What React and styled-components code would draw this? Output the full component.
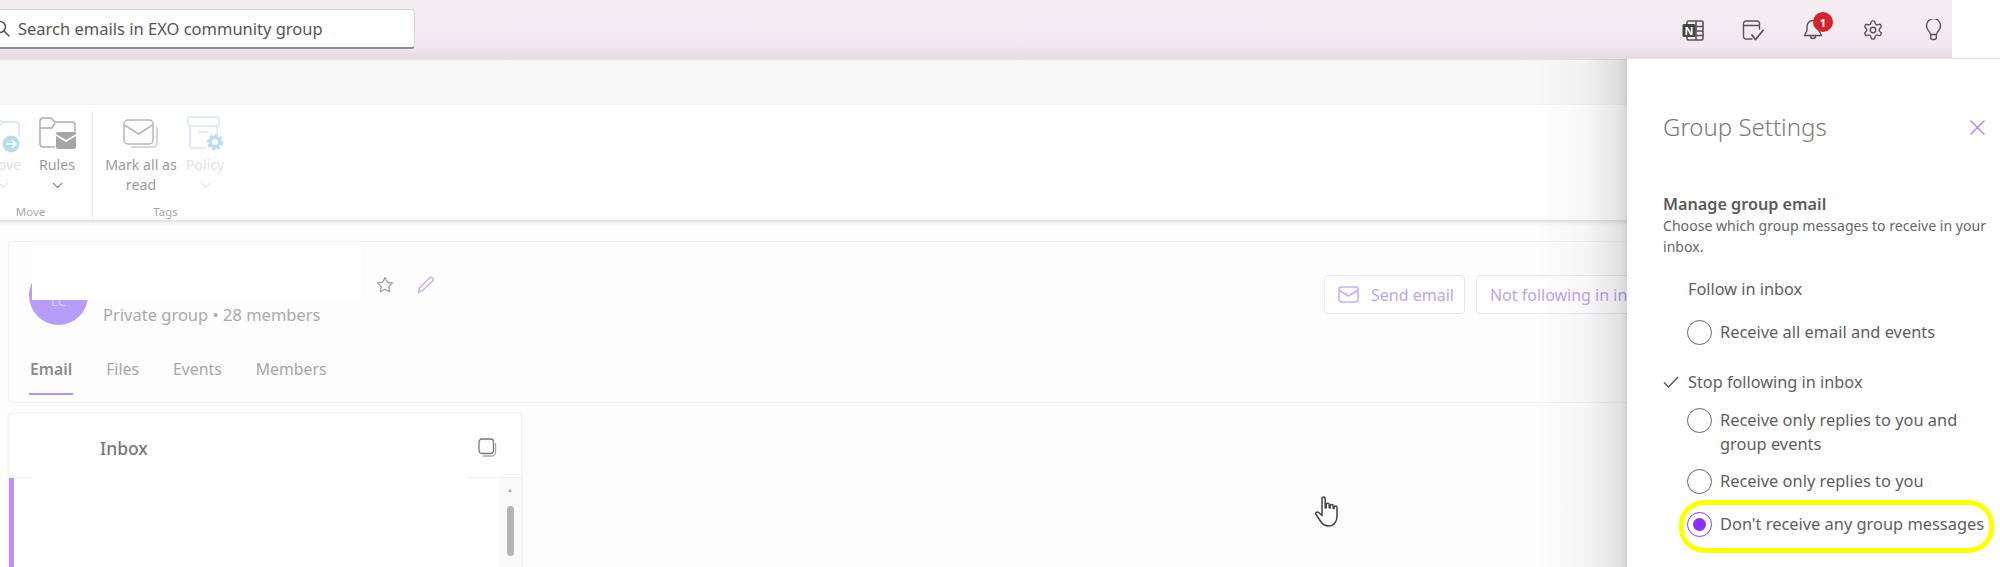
import React from "react";
import styled, { createGlobalStyle } from "styled-components";

const GlobalStyle = createGlobalStyle`
  html, body { margin: 0; padding: 0; background: #fff; }
  * { box-sizing: border-box; }
  body { font-family: "Noto Sans", "Open Sans", Arial, sans-serif; }
`;

const Page = styled.div`
  position: relative;
  width: 2000px;
  height: 567px;
  overflow: hidden;
  display: flex;
  flex-direction: column;
  background: #fdfdfd;
`;

const Header = styled.header`
  flex: none;
  height: 60px;
  display: flex;
  background: #fff;
  border-bottom: 2px solid #eadfe8;
`;

const HeaderBar = styled.div`
  width: 1952px;
  display: flex;
  align-items: center;
  justify-content: space-between;
  padding-right: 8px;
  background: linear-gradient(180deg, #f6edf3 0%, #f3e8f0 80%, #e6d9e3 100%);
`;

const SearchBox = styled.div`
  width: 435px;
  height: 40px;
  margin-left: -20px;
  display: flex;
  align-items: center;
  gap: 8px;
  padding-left: 12px;
  background: #fff;
  border: 1px solid #d9d3d7;
  border-bottom: 2px solid #8f8b8e;
  border-radius: 4px;
  font-size: 16.5px;
  color: #555;
`;

const HeaderIcons = styled.div`
  display: flex;
  align-items: center;
  gap: 38px;
  margin-top: 2px;
  color: #555;
`;

const IconSlot = styled.div`
  position: relative;
  width: 22px;
  height: 24px;
  display: flex;
  align-items: center;
  justify-content: center;
`;

const Badge = styled.span`
  position: absolute;
  top: -6px;
  right: -9px;
  width: 20px;
  height: 20px;
  border-radius: 50%;
  background: #d0252f;
  color: #fff;
  font-size: 11px;
  font-weight: 700;
  display: flex;
  align-items: center;
  justify-content: center;
`;

const Strip = styled.div`
  flex: none;
  height: 45px;
  background: #f8f8f8;
`;

const Ribbon = styled.div`
  flex: none;
  height: 115px;
  display: flex;
  padding-top: 6px;
  margin-left: -30px;
  background: #fff;
  box-shadow: 0 2px 4px rgba(0, 0, 0, 0.14);
  position: relative;
`;

const RibbonGroup = styled.div`
  display: flex;
  flex-direction: column;
  padding: 0 ${(p) => (p.$divider ? 12 : 8)}px 0 8px;
  border-right: ${(p) => (p.$divider ? "1px solid #ececec" : "none")};
  height: 109px;
`;

const RibbonItems = styled.div`
  display: flex;
  flex: 1;
  gap: ${(p) => p.$gap || 0}px;
`;

const RibbonButton = styled.div`
  width: ${(p) => p.$width}px;
  display: flex;
  flex-direction: column;
  align-items: center;
  font-size: 14.2px;
  line-height: 20px;
  text-align: center;
  color: ${(p) => (p.$faded ? "#e2e2e2" : "#9a9a9a")};
  svg.main { height: 38px; margin: 4px 0 2px; flex: none; }
`;

const GroupLabel = styled.div`
  font-size: 11.5px;
  line-height: 16px;
  color: #a8a8a8;
  text-align: center;
  padding-left: ${(p) => p.$shift || 0}px;
`;

const Content = styled.main`
  flex: 1;
  padding: 21px 0 0 8px;
  display: flex;
  flex-direction: column;
  gap: 10px;
  background: #fdfdfd;
`;

const GroupCard = styled.section`
  position: relative;
  flex: none;
  width: 1760px;
  height: 162px;
  padding: 12px 20px 0;
  background: #fdfdfd;
  border: 1px solid #f2f2f2;
  border-radius: 4px;
`;

const GroupTop = styled.div`
  display: flex;
  justify-content: space-between;
  height: 103px;
`;

const Identity = styled.div`
  display: flex;
  align-items: flex-start;
  gap: 15px;
`;

const Avatar = styled.div`
  width: 59px;
  height: 59px;
  margin-top: 12px;
  border-radius: 50%;
  background: #b79df7;
  color: #dccff9;
  font-size: 13px;
  display: flex;
  align-items: center;
  justify-content: center;
  padding-top: 10px;
`;

const GroupMeta = styled.div`
  margin-top: 50px;
  font-size: 16.5px;
  line-height: 22px;
  color: #aaa;
`;

const Redaction = styled.div`
  position: absolute;
  left: 23px;
  top: 4px;
  width: 330px;
  height: 54px;
  background: #fff;
`;

const TitleIcons = styled.div`
  position: absolute;
  left: 367px;
  top: 34px;
  display: flex;
  gap: 23px;
`;

const Actions = styled.div`
  display: flex;
  gap: 11px;
  position: absolute;
  left: 1315px;
  top: 33px;
`;

const ActionButton = styled.div`
  height: 39px;
  display: flex;
  align-items: center;
  gap: 12px;
  padding: 0 10px 0 13px;
  border: 1.5px solid #ece1fa;
  border-radius: 4px;
  background: #fff;
  color: #c0a4ec;
  font-size: 16px;
  white-space: nowrap;
`;

const Tabs = styled.nav`
  display: flex;
  gap: 32px;
`;

const Tab = styled.div`
  position: relative;
  padding: 0 1px;
  font-size: 15.8px;
  line-height: 24px;
  color: ${(p) => (p.$active ? "#8c8c8c" : "#a6a6a6")};
  font-weight: ${(p) => (p.$active ? 600 : 400)};
  &::after {
    content: "";
    display: ${(p) => (p.$active ? "block" : "none")};
    position: absolute;
    left: 0;
    right: 0;
    bottom: -14px;
    height: 2px;
    background: #b794e8;
  }
`;

const InboxCard = styled.section`
  flex: 1;
  width: 514px;
  display: flex;
  flex-direction: column;
  background: #fff;
  border: 1px solid #f3f3f3;
  border-bottom: none;
  border-radius: 4px 4px 0 0;
  box-shadow: 0 0 3px rgba(0, 0, 0, 0.05);
`;

const InboxHeader = styled.div`
  position: relative;
  flex: none;
  height: 64px;
  display: flex;
  align-items: center;
  justify-content: space-between;
  padding: 4px 24px 0 91px;
  border-bottom: 1px solid #efefef;
  font-size: 17.5px;
  font-weight: 500;
  color: #777;
  &::after {
    content: "";
    position: absolute;
    left: 23px;
    right: 55px;
    bottom: -1px;
    height: 1px;
    background: #fff;
  }
`;

const InboxBody = styled.div`
  flex: 1;
  display: flex;
  justify-content: space-between;
  border-left: 5px solid #bf8ef5;
`;

const ScrollTrack = styled.div`
  width: 22px;
  display: flex;
  flex-direction: column;
  align-items: center;
  background: #fafafa;
  color: #aaa;
  font-size: 6px;
  padding-top: 8px;
  gap: 12px;
`;

const ScrollThumb = styled.div`
  width: 7px;
  height: 50px;
  border-radius: 4px;
  background: #b5b5b5;
`;

const SettingsPanel = styled.aside`
  position: absolute;
  left: 1627px;
  top: 59px;
  bottom: 0;
  right: 0;
  padding: 52px 8px 0 36px;
  background: #fff;
  color: #5e5e5e;
  &::before {
    content: "";
    position: absolute;
    top: 0;
    bottom: 0;
    left: -90px;
    width: 90px;
    background: linear-gradient(90deg, rgba(0, 0, 0, 0) 0%, rgba(0, 0, 0, 0.03) 55%, rgba(0, 0, 0, 0.1) 90%, rgba(0, 0, 0, 0.17) 100%);
    pointer-events: none;
  }
`;

const PanelTitle = styled.div`
  display: flex;
  align-items: center;
  justify-content: space-between;
  padding-right: 7px;
  font-size: 24px;
  font-weight: 300;
  line-height: 32px;
  color: #7a7a7a;
  margin-bottom: 50px;
`;

const Heading = styled.div`
  font-size: 16.2px;
  font-weight: 600;
  line-height: 22px;
  color: #5a5a5a;
`;

const Description = styled.div`
  font-size: 14.1px;
  line-height: 21px;
  color: #666;
  margin-bottom: 20px;
`;

const OptionTitle = styled.div`
  position: relative;
  padding-left: 25px;
  font-size: 16.3px;
  line-height: 24px;
  margin-bottom: ${(p) => p.$mb}px;
  svg { position: absolute; left: 0; top: 6px; }
`;

const RadioRow = styled.div`
  display: flex;
  align-items: flex-start;
  gap: 8px;
  padding: 0 7px 0 24px;
  font-size: 16.4px;
  line-height: 24px;
  margin-bottom: ${(p) => p.$mb}px;
`;

const Radio = styled.span`
  flex: none;
  width: 25px;
  height: 25px;
  border-radius: 50%;
  border: 1.5px solid ${(p) => (p.$checked ? "#8b3df5" : "#666")};
  display: flex;
  align-items: center;
  justify-content: center;
  &::after {
    content: "";
    display: ${(p) => (p.$checked ? "block" : "none")};
    width: 13px;
    height: 13px;
    border-radius: 50%;
    background: #8b2ff5;
  }
`;

const Highlight = styled.div`
  position: absolute;
  left: 52px;
  top: 441px;
  width: 315px;
  height: 53px;
  border: 5px solid #ffff00;
  border-radius: 26px / 24px;
  pointer-events: none;
`;

const CursorHand = styled.svg`
  position: absolute;
  left: 1314px;
  top: 496px;
`;

const stroke = { fill: "none", stroke: "currentColor", strokeWidth: 1.4, strokeLinecap: "round", strokeLinejoin: "round" };

const SearchIcon = () => (
  <svg width="17" height="17" viewBox="0 0 17 17" {...stroke} strokeWidth="1.5">
    <circle cx="7" cy="7" r="5.5" />
    <path d="M11 11l5 5" />
  </svg>
);

const OneNoteIcon = () => (
  <svg width="22" height="21" viewBox="0 0 22 21">
    <rect x="5" y="1" width="16" height="19" rx="1.5" fill="none" stroke="#555" strokeWidth="1.6" />
    <path d="M14 1v19M14 6.5h7M14 11h7M14 15.5h7" stroke="#555" strokeWidth="1.6" />
    <rect x="0.5" y="4" width="13" height="13" rx="1.5" fill="#444" />
    <text x="7" y="14.5" fontSize="11" fontWeight="700" fill="#fff" textAnchor="middle" fontFamily="Noto Sans">N</text>
  </svg>
);

const TasksIcon = () => (
  <svg width="22" height="21" viewBox="0 0 22 21" {...stroke} stroke="#555">
    <path d="M10 19H4a2.5 2.5 0 0 1-2.5-2.5v-13A2.5 2.5 0 0 1 4 1h11a2.5 2.5 0 0 1 2.5 2.5V9" />
    <path d="M1.5 5.5h16" />
    <path d="M10 15l3.5 4.5L21 10.5" strokeWidth="1.8" />
  </svg>
);

const BellIcon = () => (
  <svg width="20" height="22" viewBox="0 0 20 22" {...stroke} stroke="#555">
    <path d="M10 1.5a6 6 0 0 0-6 6v4L1.5 16.5h17L16 11.5v-4a6 6 0 0 0-6-6z" />
    <path d="M7.5 17a2.5 2.5 0 0 0 5 0" />
  </svg>
);

const GearIcon = () => (
  <svg width="22" height="22" viewBox="0 0 24 24" {...stroke} stroke="#555" strokeWidth="1.5">
    <path d="M12.2 2h-.4a2 2 0 0 0-2 2v.2a2 2 0 0 1-1 1.7l-.4.3a2 2 0 0 1-2 0l-.2-.1a2 2 0 0 0-2.7.7l-.2.4a2 2 0 0 0 .7 2.7l.2.1a2 2 0 0 1 1 1.7v.5a2 2 0 0 1-1 1.7l-.2.1a2 2 0 0 0-.7 2.7l.2.4a2 2 0 0 0 2.7.7l.2-.1a2 2 0 0 1 2 0l.4.3a2 2 0 0 1 1 1.7v.2a2 2 0 0 0 2 2h.4a2 2 0 0 0 2-2v-.2a2 2 0 0 1 1-1.7l.4-.3a2 2 0 0 1 2 0l.2.1a2 2 0 0 0 2.7-.7l.2-.4a2 2 0 0 0-.7-2.7l-.2-.1a2 2 0 0 1-1-1.7v-.5a2 2 0 0 1 1-1.7l.2-.1a2 2 0 0 0 .7-2.7l-.2-.4a2 2 0 0 0-2.7-.7l-.2.1a2 2 0 0 1-2 0l-.4-.3a2 2 0 0 1-1-1.7V4a2 2 0 0 0-2-2z" />
    <circle cx="12" cy="12" r="3" />
  </svg>
);

const BulbIcon = () => (
  <svg width="17" height="22" viewBox="0 0 17 22" {...stroke} stroke="#555">
    <path d="M5.5 15.5c-.3-2-1-2.8-2.4-4.4A7 7 0 1 1 14 11c-1.5 1.6-2.2 2.5-2.5 4.5z" />
    <path d="M5.7 15.5v3a2 2 0 0 0 2 2h1.6a2 2 0 0 0 2-2v-3" />
  </svg>
);

const MoveIcon = () => (
  <svg className="main" width="37" height="38" viewBox="0 0 37 38" fill="none">
    <path d="M3 28V6a3 3 0 0 1 3-3h7l4 4h14a3 3 0 0 1 3 3v12" stroke="#cfe4f3" strokeWidth="1.5" />
    <path d="M3 11h11l4-4" stroke="#cfe4f3" strokeWidth="1.5" />
    <circle cx="26" cy="29" r="8.5" fill="#b9dcf2" />
    <path d="M21 29h10M27 25l4 4-4 4" stroke="#fff" strokeWidth="1.6" />
  </svg>
);

const RulesIcon = () => (
  <svg className="main" width="37" height="34" viewBox="0 0 37 34" fill="none">
    <path d="M16 30H4a3 3 0 0 1-3-3V4a3 3 0 0 1 3-3h8l4 4h17a3 3 0 0 1 3 3v8" stroke="#b4aca8" strokeWidth="1.5" />
    <path d="M1 11h12l3-5" stroke="#b4aca8" strokeWidth="1.5" />
    <rect x="17" y="15" width="20" height="17" rx="2" fill="#a5a5a5" />
    <path d="M17 18l10 6 10-6" stroke="#fff" strokeWidth="1.6" />
  </svg>
);

const MarkReadIcon = () => (
  <svg className="main" width="36" height="30" viewBox="0 0 36 30" fill="none">
    <path d="M34 8v16a4 4 0 0 1-4 4H8" stroke="#c9c9c9" strokeWidth="1.5" />
    <rect x="1" y="1" width="29" height="24" rx="4" stroke="#bdb5b1" strokeWidth="1.5" fill="#fff" />
    <path d="M1.5 6l14 9 14-9" stroke="#bdb5b1" strokeWidth="1.5" />
  </svg>
);

const PolicyIcon = () => (
  <svg className="main" width="37" height="36" viewBox="0 0 37 36" fill="none">
    <rect x="1" y="1" width="31" height="9" rx="2" stroke="#d6e8f4" strokeWidth="1.5" />
    <path d="M3 10v20a2 2 0 0 0 2 2h14M30 10v8M11 16h10" stroke="#d6e8f4" strokeWidth="1.5" />
    <circle cx="28" cy="26" r="6" fill="none" stroke="#bcdcf2" strokeWidth="4" strokeDasharray="3 1.5" />
    <circle cx="28" cy="26" r="4.5" fill="none" stroke="#bcdcf2" strokeWidth="3" />
  </svg>
);

const Chevron = ({ color }) => (
  <svg width="11" height="7" viewBox="0 0 11 7" fill="none" stroke={color} strokeWidth="1.2" style={{ marginTop: 7 }}>
    <path d="M1 1l4.5 4.5L10 1" />
  </svg>
);

const StarIcon = () => (
  <svg width="18" height="18" viewBox="0 0 18 18" fill="none" stroke="#9a9a9a" strokeWidth="1.2" strokeLinejoin="round">
    <path d="M9 1.5l2.3 4.8 5.2.7-3.8 3.6 1 5.2L9 13.3l-4.7 2.500 1-5.200L1.500 7l5.200-.7z" />
  </svg>
);

const PencilIcon = () => (
  <svg width="18" height="18" viewBox="0 0 18 18" fill="none" stroke="#c6a9ef" strokeWidth="1.3" strokeLinejoin="round">
    <path d="M1.5 16.5l1-4.5L12.5 2a1.9 1.9 0 0 1 3 3l-10 9.5z" />
  </svg>
);

const MailIcon = () => (
  <svg width="21" height="17" viewBox="0 0 21 17" fill="none" stroke="#c9aef0" strokeWidth="1.6">
    <rect x="1" y="1" width="19" height="15" rx="2.5" />
    <path d="M1.5 4.5l9 5.5 9-5.5" />
  </svg>
);

const CopyIcon = () => (
  <svg width="19" height="19" viewBox="0 0 19 19" fill="none" stroke="#777" strokeWidth="1.3">
    <rect x="1" y="1" width="14.5" height="14.5" rx="3" />
    <path d="M17.5 5v9.5a3.5 3.5 0 0 1-3.5 3.5H5" stroke="#aaa" />
  </svg>
);

const CloseIcon = () => (
  <svg width="15" height="15" viewBox="0 0 15 15" stroke="#a77ee0" strokeWidth="1.2">
    <path d="M0.5 0.5l14 14M14.5 0.5l-14 14" />
  </svg>
);

const CheckIcon = () => (
  <svg width="16" height="12" viewBox="0 0 16 12" fill="none" stroke="#555" strokeWidth="1.4">
    <path d="M1 6.5l4.5 4.500L15 1" />
  </svg>
);

const App = () => {
  return (
    <Page>
      <GlobalStyle />
      <Header>
        <HeaderBar>
          <SearchBox>
            <SearchIcon />
            Search emails in EXO community group
          </SearchBox>
          <HeaderIcons>
            <IconSlot><OneNoteIcon /></IconSlot>
            <IconSlot><TasksIcon /></IconSlot>
            <IconSlot><BellIcon /><Badge>1</Badge></IconSlot>
            <IconSlot><GearIcon /></IconSlot>
            <IconSlot><BulbIcon /></IconSlot>
          </HeaderIcons>
        </HeaderBar>
      </Header>
      <Strip />
      <Ribbon>
        <RibbonGroup $divider>
          <RibbonItems $gap={6}>
            <RibbonButton $width={50} $faded>
              <MoveIcon />
              Move
              <Chevron color="#e4e4e4" />
            </RibbonButton>
            <RibbonButton $width={46}>
              <RulesIcon />
              Rules
              <Chevron color="#888" />
            </RibbonButton>
          </RibbonItems>
          <GroupLabel $shift={3}>Move</GroupLabel>
        </RibbonGroup>
        <RibbonGroup>
          <RibbonItems $gap={2}>
            <RibbonButton $width={80}>
              <MarkReadIcon />
              Mark all as read
            </RibbonButton>
            <RibbonButton $width={44} $faded>
              <PolicyIcon />
              Policy
              <Chevron color="#e8e8e8" />
            </RibbonButton>
          </RibbonItems>
          <GroupLabel $shift={3}>Tags</GroupLabel>
        </RibbonGroup>
      </Ribbon>
      <Content>
        <GroupCard>
          <GroupTop>
            <Identity>
              <Avatar>LC</Avatar>
              <GroupMeta>Private group • 28 members</GroupMeta>
            </Identity>
            <Actions>
              <ActionButton><MailIcon />Send email</ActionButton>
              <ActionButton>Not following in inbox</ActionButton>
            </Actions>
          </GroupTop>
          <Redaction />
          <TitleIcons><StarIcon /><PencilIcon /></TitleIcons>
          <Tabs>
            <Tab $active>Email</Tab>
            <Tab>Files</Tab>
            <Tab>Events</Tab>
            <Tab>Members</Tab>
          </Tabs>
        </GroupCard>
        <InboxCard>
          <InboxHeader>
            Inbox
            <CopyIcon />
          </InboxHeader>
          <InboxBody>
            <span />
            <ScrollTrack>
              ▲
              <ScrollThumb />
            </ScrollTrack>
          </InboxBody>
        </InboxCard>
      </Content>

      <CursorHand width="26" height="32" viewBox="0 0 26 32" fill="#fff" stroke="#444" strokeWidth="1.5" strokeLinejoin="round" strokeLinecap="round">
        <path d="M8 2.5a1.6 1.6 0 0 1 3.2 0V12l1-.3V8.8a1.5 1.5 0 0 1 3 0v3l1 .1V10a1.5 1.5 0 0 1 3 .2v2.4l.8.1v-1.2a1.5 1.5 0 0 1 3 .2v8.6c0 5-3 9.7-8.2 9.7-4.2 0-6.4-1.8-8.4-5L2 18.5c-1-1.5 1-3.3 2.7-2l3.3 3z" />
      </CursorHand>

      <SettingsPanel>
        <PanelTitle>
          Group Settings
          <CloseIcon />
        </PanelTitle>
        <Heading>Manage group email</Heading>
        <Description>Choose which group messages to receive in your inbox.</Description>
        <OptionTitle $mb={19}>Follow in inbox</OptionTitle>
        <RadioRow $mb={25}><Radio />Receive all email and events</RadioRow>
        <OptionTitle $mb={14}><CheckIcon />Stop following in inbox</OptionTitle>
        <RadioRow $mb={13}><Radio />Receive only replies to you and group events</RadioRow>
        <RadioRow $mb={18}><Radio />Receive only replies to you</RadioRow>
        <RadioRow $mb={0}><Radio $checked />Don't receive any group messages</RadioRow>
        <Highlight />
      </SettingsPanel>
    </Page>
  );
};

export default App;
